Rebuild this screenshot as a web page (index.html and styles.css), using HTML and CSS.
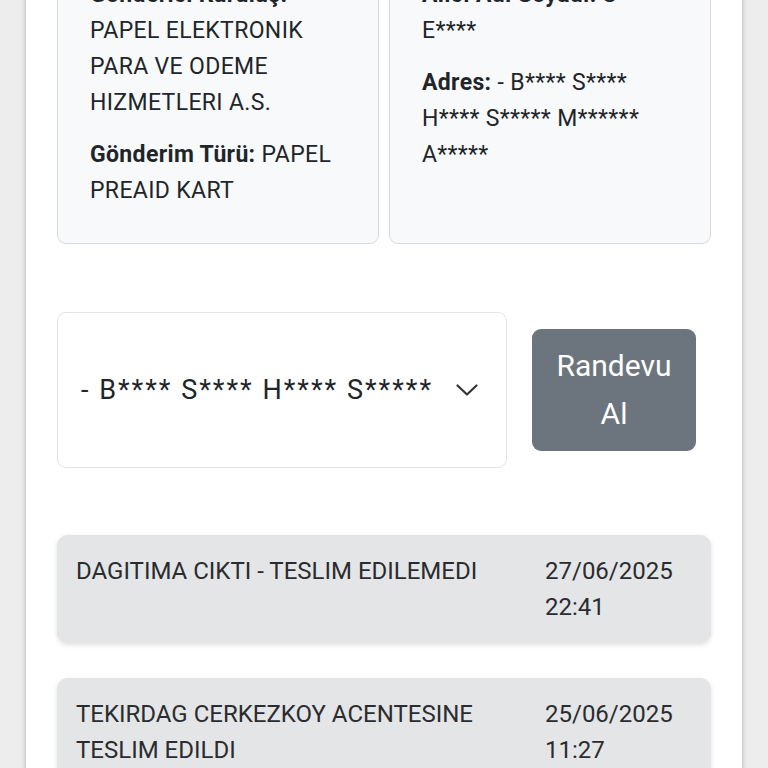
FILE: index.html
```html
<!DOCTYPE html>
<html lang="tr">
<head>
<meta charset="utf-8">
<title>Gönderi Takip</title>
<link rel="stylesheet" href="styles.css">
</head>
<body>
<div class="page">
  <div class="info-row">
    <div class="info-card">
      <p><b>Gönderici Kuruluş:</b> PAPEL ELEKTRONIK PARA VE ODEME HIZMETLERI A.S.</p>
      <p><b>Gönderim Türü:</b> PAPEL PREAID KART</p>
    </div>
    <div class="info-card">
      <p><b>Alıcı Adı Soyadı:</b> S**** E****</p>
      <p><b>Adres:</b> - B**** S**** H**** S***** M****** A*****</p>
    </div>
  </div>

  <div class="action-row">
    <div class="select-box">
      <span class="select-text">- B**** S**** H**** S*****</span>
      <svg class="chevron" width="22" height="12" viewBox="0 0 22 12"><path d="M1.5 1.5 L11 10.5 L20.5 1.5" fill="none" stroke="#333" stroke-width="2.2" stroke-linecap="round" stroke-linejoin="round"/></svg>
    </div>
    <button class="btn">Randevu<br>Al</button>
  </div>

  <div class="timeline">
    <div class="event">
      <div class="event-desc">DAGITIMA CIKTI - TESLIM EDILEMEDI</div>
      <div class="event-date">27/06/2025<br>22:41</div>
    </div>
    <div class="event">
      <div class="event-desc">TEKIRDAG CERKEZKOY ACENTESINE TESLIM EDILDI</div>
      <div class="event-date">25/06/2025<br>11:27</div>
    </div>
  </div>
</div>
</body>
</html>
```
FILE: styles.css
```css
html, body {
  margin: 0;
  padding: 0;
}
body {
  background: #ededed;
  font-family: Roboto, "Noto Sans", "Liberation Sans", sans-serif;
  color: #212529;
  overflow: hidden;
  height: 768px;
}
.page {
  margin: 0 26px;
  background: #fff;
  min-height: 900px;
  box-shadow: 0 0 5px rgba(0, 0, 0, 0.28);
  padding: 0 31px;
}
.info-row {
  display: grid;
  grid-template-columns: 1fr 1fr;
  gap: 10px;
  margin-top: -40px;
}
.info-card {
  background: #f8f9fa;
  border: 1px solid #d9dadb;
  border-radius: 9px;
  padding: 16px 30px 18px 32px;
  font-size: 23px;
  line-height: 36px;
  letter-spacing: 0.35px;
}
.info-card p {
  margin: 0 0 16px;
}
.action-row {
  display: flex;
  align-items: center;
  gap: 25px;
  margin-top: 68px;
  padding-right: 15px;
}
.select-box {
  flex: 1;
  height: 154px;
  border: 1px solid #e2e3e5;
  border-radius: 9px;
  background: #fff;
  display: flex;
  align-items: center;
  padding: 0 28px 0 23px;
  font-size: 27px;
  letter-spacing: 2px;
}
.select-text {
  flex: 1;
  white-space: nowrap;
}
.chevron {
  display: block;
}
.btn {
  width: 164px;
  height: 122px;
  background: #6c757d;
  color: #fff;
  border: none;
  border-radius: 9px;
  font-family: Roboto, "Noto Sans", sans-serif;
  font-size: 30px;
  line-height: 48px;
  padding: 0 10px;
}
.timeline {
  margin-top: 67px;
  display: flex;
  flex-direction: column;
  gap: 35px;
}
.event {
  background: #e4e5e7;
  border-radius: 11px;
  padding: 18px 19px;
  display: flex;
  font-size: 24px;
  line-height: 36px;
  color: #2a2c2f;
  box-shadow: 0 2px 5px rgba(0, 0, 0, 0.12);
}
.event-desc {
  flex: 0 0 469px;
  padding-right: 20px;
  box-sizing: border-box;
}
.event-date {
  flex: 1;
}
```
